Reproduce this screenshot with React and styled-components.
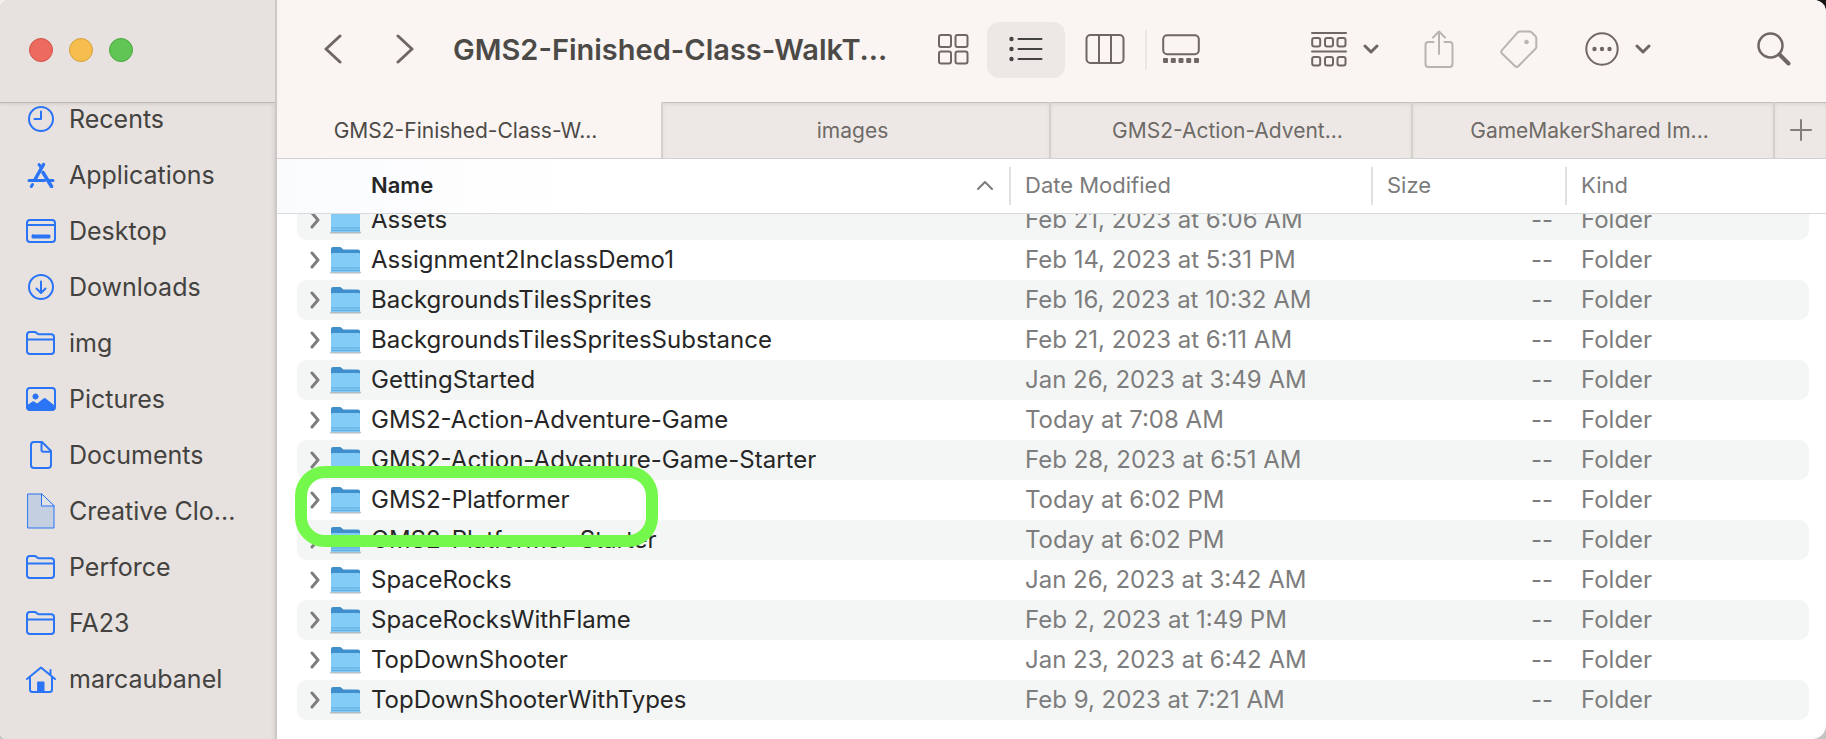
import React from "react";
import styled, { createGlobalStyle, css } from "styled-components";

const GlobalStyle = createGlobalStyle`
  *, *::before, *::after { box-sizing: border-box; }
  body {
    margin: 0;
    background: linear-gradient(to top, #c4c4c4 50%, transparent 50%),
      linear-gradient(to right, #f4f1ef 50%, #161616 50%);
    font-family: Inter, "Liberation Sans", sans-serif;
    -webkit-font-smoothing: antialiased;
  }
  button { font: inherit; color: inherit; background: none; border: 0; padding: 0; margin: 0; cursor: pointer; }
  a { color: inherit; text-decoration: none; }
  svg { display: block; flex: none; }
`;

const Window = styled.main`
  display: grid;
  grid-template-columns: 277px minmax(0, 1fr);
  min-height: 100vh;
  background: #ffffff;
  border-radius: 8px 12px 14px 6px;
  overflow: hidden;
`;

const Sidebar = styled.aside`
  display: flex;
  flex-direction: column;
  background: #e7e2df;
  color: #434240;
  border-right: 2px solid #cdc8c5;
  box-shadow: inset -4px 0 4px -3px #d3cecb;
`;

const SidebarTop = styled.div`
  position: relative;
  z-index: 1;
  display: flex;
  align-items: center;
  gap: 16px;
  height: 103px;
  padding: 0 0 2px 29px;
  background: #e7e2df;
  border-bottom: 1px solid #bcb7b4;
  box-shadow: 0 1px 3px #cfcac7;
`;

const TrafficLight = styled.button`
  width: 24px;
  height: 24px;
  border-radius: 50%;
  background: ${(p) => p.$fill};
  border: 1px solid ${(p) => p.$edge};
`;

const Places = styled.ul`
  list-style: none;
  margin: -12px 0 0;
  padding: 0;
`;

const PlaceLink = styled.a`
  display: flex;
  align-items: center;
  height: 56px;
  padding: 0 24px;
  gap: 11px;
  font-size: 25px;
  line-height: 32px;
  color: #434240;

  svg { color: #2a74f5; }
`;

const PlaceIcon = styled.span`
  display: flex;
  justify-content: center;
  width: 34px;
`;

const PlaceName = styled.span`
  white-space: nowrap;
`;

const Browser = styled.section`
  display: flex;
  flex-direction: column;
  min-width: 0;
`;

const Toolbar = styled.header`
  display: flex;
  align-items: center;
  height: 102px;
  padding: 0 35px 2px 36px;
  background: #faf5f2;
  color: #6e6763;
`;

const NavButtons = styled.div`
  display: flex;
  gap: 32px;
`;

const IconButton = styled.button`
  display: flex;
  align-items: center;
  justify-content: center;
  gap: 16px;
  height: 56px;
  min-width: 40px;
  padding-bottom: 2px;
  opacity: ${(p) => (p.disabled ? 0.45 : 1)};
`;

const Title = styled.h1`
  flex: 1;
  min-width: 0;
  margin: 0 0 0 28px;
  font-size: 29px;
  line-height: 36px;
  font-weight: 600;
  color: #4c4a47;
  white-space: nowrap;
  overflow: hidden;
`;

const ViewSwitch = styled.div`
  display: flex;
  align-items: center;
  margin-right: 96px;
`;

const ViewButton = styled(IconButton)`
  width: 80px;
  border-radius: 12px;
  ${(p) =>
    p.$active &&
    css`
      width: 78px;
      background: #ede8e5;
      color: #454341;
    `}
  ${(p) =>
    p.$edge &&
    css`
      width: 68px;
    `}
`;

const ViewDivider = styled.span`
  width: 2px;
  height: 40px;
  background: #ece7e4;
`;

const Actions = styled.div`
  display: flex;
  align-items: center;
  gap: 40px;
`;

const MoreButton = styled(IconButton)`
  margin-left: 6px;
`;

const SearchButton = styled(IconButton)`
  min-width: 32px;
  margin-left: 66px;
`;

const TabBar = styled.div`
  display: grid;
  grid-template-columns: 384fr 388fr 362fr 362fr 53px;
  height: 57px;
  border-bottom: 1px solid #d3d2d2;
  background: #ede8e5;
`;

const Tab = styled.button`
  overflow: hidden;
  padding: 1px 7px 0 0;
  white-space: nowrap;
  font-size: 21px;
  line-height: 28px;
  color: ${(p) => (p.$active ? "#4c4a47" : "#6e6a67")};
  background: ${(p) => (p.$active ? "#faf5f2" : "#ede8e5")};
  ${(p) =>
    !p.$active &&
    css`
      border-left: 2px solid #d6d1ce;
      box-shadow: inset 0 1px 0 #c4bfbc, inset 0 3px 4px -1px #d8d3d0;
    `}
`;

const NewTab = styled(Tab)`
  display: flex;
  align-items: center;
  justify-content: center;
  padding: 0;
  color: #827e7b;
`;

const FileTable = styled.table`
  display: block;
  color: #7d7d7d;
`;

const FileHead = styled.thead`
  display: block;
  position: relative;
  z-index: 1;
  background: linear-gradient(to right, #fafbfd, #ffffff 20%);
  border-bottom: 1px solid #d8dada;
`;

const HeadRow = styled.tr`
  display: grid;
  grid-template-columns: minmax(0, 1fr) 362px 194px 261px;
  align-items: center;
  height: 54px;
`;

const HeadCell = styled.th`
  display: flex;
  align-items: center;
  justify-content: space-between;
  height: 38px;
  padding: 0 16px 2px 14px;
  border-left: 2px solid #e0e0e0;
  font-size: 22px;
  line-height: 28px;
  font-weight: 400;
  color: #7b7b7b;
`;

const NameHeadCell = styled(HeadCell)`
  border-left: 0;
  padding-left: 94px;
  font-weight: 600;
  color: #262626;

  svg { color: #7b7b7b; }
`;

const FileBody = styled.tbody`
  display: block;
  margin: -14px 17px 19px 20px;
`;

const FileRow = styled.tr`
  display: grid;
  grid-template-columns: minmax(0, 1fr) 362px 194px 244px;
  align-items: center;
  position: relative;
  height: 40px;
  border-radius: 10px;
  font-size: 24px;
  line-height: 32px;

  &:nth-child(odd) { background: #f4f6f5; }
`;

const Cell = styled.td`
  padding: 0 12px 0 16px;
  text-align: ${(p) => p.$align || "left"};
  white-space: nowrap;
`;

const NameCell = styled.td`
  display: flex;
  align-items: center;
  padding: 0 0 0 8px;
  color: #262626;
  white-space: nowrap;
`;

const Disclosure = styled.button`
  display: flex;
  align-items: center;
  justify-content: center;
  width: 20px;
  height: 32px;
  margin-right: 5px;
  color: #7e7e7e;
`;

const FileName = styled.span`
  margin-left: 10px;
`;

const Highlight = styled.span`
  position: absolute;
  z-index: 1;
  top: -14px;
  left: -2px;
  width: 363px;
  height: 81px;
  border: 12px solid #75f84c;
  border-radius: 30px;
  pointer-events: none;
`;

function Icon({ w, h, sw = 2, children }) {
  return (
    <svg width={w} height={h} viewBox={`0 0 ${w} ${h}`} fill="none" stroke="currentColor"
      strokeWidth={sw} strokeLinecap="round" strokeLinejoin="round" aria-hidden="true">
      {children}
    </svg>
  );
}

const RecentsIcon = () => (
  <Icon w={26} h={26}><circle cx="13" cy="13" r="12" /><path d="M13 5.5V13H6.5" /></Icon>
);

const ApplicationsIcon = () => (
  <Icon w={28} h={26} sw={3}>
    <path d="M16.500 2.500 8 17.500" strokeWidth="3.500" />
    <path d="M12 2.500l2 3" />
    <path d="M16 10.500l8.500 14" strokeWidth="3.500" />
    <path d="M2 18.500h15.500M22 18.500H26" />
    <path d="M5.500 22.500l-1.200 2" />
  </Icon>
);

const DesktopIcon = () => (
  <Icon w={30} h={24}>
    <rect x="1" y="1" width="28" height="22" rx="3" />
    <path d="M1 6h28" />
    <rect x="6" y="16" width="18" height="3" rx="0.5" fill="currentColor" strokeWidth="1" />
  </Icon>
);

const DownloadsIcon = () => (
  <Icon w={26} h={26}><circle cx="13" cy="13" r="12" /><path d="M13 7.500V18.500M8.500 14.500l4.500 4.500 4.500-4.500" /></Icon>
);

const FolderIcon = () => (
  <Icon w={30} h={24}>
    <path d="M1 8.500V4c0-2 1-3 3-3h4.500c1 0 1.500.3 2.200 1l.8.7c.4.4.8.5 1.500.5H25c2 0 3 1 3 3V20c0 2-1 3-3 3H4c-2 0-3-1-3-3V8.500h27" />
  </Icon>
);

const PicturesIcon = () => (
  <Icon w={30} h={24}>
    <rect x="1" y="1" width="28" height="22" rx="3" />
    <circle cx="9.500" cy="9.500" r="2.600" fill="currentColor" strokeWidth="1" />
    <path d="M1.500 18.500l5-3.500c.6-.4 1-.4 1.600 0l3 2 6.500-5c.8-.6 1.400-.6 2.200 0l8.700 7V21c0 1-.7 2-2 2H4c-1.500 0-2.500-1-2.500-2z" fill="currentColor" strokeWidth="1" />
  </Icon>
);

const DocumentIcon = () => (
  <Icon w={22} h={28}>
    <path d="M4 1h8l9 9v14c0 2-1 3-3 3H4c-2 0-3-1-3-3V4c0-2 1-3 3-3z" />
    <path d="M11.500 1v8c0 1.200.5 1.800 1.800 1.800H21" />
  </Icon>
);

const CreativeCloudIcon = () => (
  <Icon w={28} h={36} sw={1}>
    <path d="M1 1h13l13 12v22H1z" fill="#c4cfe2" />
    <path d="M14.500 1v12H27z" fill="#e2e2e6" />
  </Icon>
);

const HomeIcon = () => (
  <Icon w={32} h={27}>
    <path d="M2 13 16 1.500 30 13M25.500 8.500V4M5 12v11.500c0 1.500.8 2.500 2.500 2.500h17c1.700 0 2.500-1 2.500-2.500V12" />
    <path d="M13 16h6v9.500h-6z" fill="currentColor" strokeWidth="1" />
  </Icon>
);

const BackIcon = () => <Icon w={20} h={30} sw={3}><path d="M17 2 3 15l14 13" /></Icon>;
const ForwardIcon = () => <Icon w={20} h={30} sw={3}><path d="M3 2l14 13L3 28" /></Icon>;
const DropIcon = () => <Icon w={16} h={12} sw={3}><path d="M2 3l6 6 6-6" /></Icon>;

const GridIcon = () => (
  <Icon w={32} h={32} sw={2}>
    <rect x="2" y="2" width="12" height="12" rx="2" />
    <rect x="18.500" y="2" width="12" height="12" rx="2" />
    <rect x="2" y="18.500" width="12" height="12" rx="2" />
    <rect x="18.500" y="18.500" width="12" height="12" rx="2" />
  </Icon>
);

const ListIcon = () => (
  <Icon w={34} h={26}>
    <path d="M9.500 3h23M9.500 13h23M9.500 23h23" />
    <g fill="currentColor" stroke="none">
      <circle cx="2.500" cy="3" r="2.200" /><circle cx="2.500" cy="13" r="2.200" /><circle cx="2.500" cy="23" r="2.200" />
    </g>
  </Icon>
);

const ColumnsIcon = () => (
  <Icon w={40} h={32}>
    <rect x="1.500" y="2" width="37" height="28" rx="4" /><path d="M14 2v28M26 2v28" />
  </Icon>
);

const GalleryIcon = () => (
  <Icon w={38} h={30}>
    <rect x="1.200" y="1.200" width="35.600" height="19" rx="4" />
    <g fill="currentColor" stroke="none">
      {[1, 8.8, 16.5, 24.2, 32].map((x) => <rect key={x} x={x} y="24" width="5" height="5" rx="1" />)}
    </g>
  </Icon>
);

const GroupIcon = () => (
  <Icon w={36} h={36}>
    <path d="M1 2h34M1 20.500h34" />
    {[1.2, 14, 26.5].map((x) => (
      <g key={x}>
        <rect x={x} y="7" width="8" height="8.500" rx="2" />
        <rect x={x} y="26" width="8" height="8.500" rx="2" />
      </g>
    ))}
  </Icon>
);

const ShareIcon = () => (
  <Icon w={30} h={38}>
    <path d="M9.500 12H4.500c-2 0-3 1-3 3v19c0 2 1 3 3 3h21c2 0 3-1 3-3V15c0-2-1-3-3-3h-5" />
    <path d="M15 24V1.500M9 7.500l6-6 6 6" />
  </Icon>
);

const TagIcon = () => (
  <Icon w={38} h={38}>
    <path d="M20 1.500h9.500c1 0 1.600.3 2.300 1l3.500 3.500c.7.7 1 1.300 1 2.300V16.500c0 1-.3 1.700-1 2.500L18.500 36c-1.200 1.200-2.400 1.200-3.600 0L2 23.500c-1-1-1-2.200 0-3.300L17.500 2.600c.7-.8 1.400-1.100 2.500-1.100z" />
    <circle cx="26.500" cy="12" r="2" fill="currentColor" strokeWidth="0.500" />
  </Icon>
);

const MoreIcon = () => (
  <Icon w={34} h={34}>
    <circle cx="17" cy="17" r="15.700" />
    <g fill="currentColor" stroke="none">
      <circle cx="9.500" cy="17" r="2.200" /><circle cx="17" cy="17" r="2.200" /><circle cx="24.500" cy="17" r="2.200" />
    </g>
  </Icon>
);

const SearchIcon = () => (
  <Icon w={34} h={34} sw={3}>
    <circle cx="13.500" cy="13.500" r="12" strokeWidth="2.500" /><path d="M22.500 22.500l9 9" strokeWidth="4" />
  </Icon>
);

const PlusIcon = () => <Icon w={22} h={22}><path d="M11 1v20M1 11h20" /></Icon>;
const SortIcon = () => <Icon w={16} h={10}><path d="M1 9l7-7 7 7" /></Icon>;
const RowChevron = () => <Icon w={10} h={18} sw={3}><path d="M2 2l6 7-6 7" /></Icon>;

const FinderFolder = () => (
  <svg width="31" height="28" viewBox="0 0 31 28" aria-hidden="true">
    <path d="M1 3c0-1.300.7-2 2-2h6.500c1 0 1.500.3 2.200 1l1 1c.5.5 1 .6 1.800.6H28c1.300 0 2 .7 2 2V24H1z" fill="#3f8fcd" />
    <path d="M1 26.500h29" stroke="#000" strokeOpacity="0.250" strokeWidth="2" strokeLinecap="round" />
    <path d="M1 8.500C1 7.500 1.500 7 2.500 7h26c1 0 1.500.5 1.500 1.500V25c0 .8-.5 1.300-1.300 1.300H2.300C1.500 26.300 1 25.800 1 25z" fill="#82ccf7" />
    <path d="M1 22h29M1 24.300h29" stroke="#5aa9dc" strokeWidth="1" />
  </svg>
);

const places = [
  ["Recents", RecentsIcon],
  ["Applications", ApplicationsIcon],
  ["Desktop", DesktopIcon],
  ["Downloads", DownloadsIcon],
  ["img", FolderIcon],
  ["Pictures", PicturesIcon],
  ["Documents", DocumentIcon],
  ["Creative Clo...", CreativeCloudIcon],
  ["Perforce", FolderIcon],
  ["FA23", FolderIcon],
  ["marcaubanel", HomeIcon],
];

const tabs = ["GMS2-Finished-Class-W...", "images", "GMS2-Action-Advent...", "GameMakerShared Im..."];

const files = [
  ["Assets", "Feb 21, 2023 at 6:06 AM"],
  ["Assignment2InclassDemo1", "Feb 14, 2023 at 5:31 PM"],
  ["BackgroundsTilesSprites", "Feb 16, 2023 at 10:32 AM"],
  ["BackgroundsTilesSpritesSubstance", "Feb 21, 2023 at 6:11 AM"],
  ["GettingStarted", "Jan 26, 2023 at 3:49 AM"],
  ["GMS2-Action-Adventure-Game", "Today at 7:08 AM"],
  ["GMS2-Action-Adventure-Game-Starter", "Feb 28, 2023 at 6:51 AM"],
  ["GMS2-Platformer", "Today at 6:02 PM"],
  ["GMS2-Platformer-Starter", "Today at 6:02 PM"],
  ["SpaceRocks", "Jan 26, 2023 at 3:42 AM"],
  ["SpaceRocksWithFlame", "Feb 2, 2023 at 1:49 PM"],
  ["TopDownShooter", "Jan 23, 2023 at 6:42 AM"],
  ["TopDownShooterWithTypes", "Feb 9, 2023 at 7:21 AM"],
];

const highlighted = "GMS2-Platformer";

export default function App() {
  return (
    <>
      <GlobalStyle />
      <Window>
        <Sidebar>
          <SidebarTop>
            <TrafficLight aria-label="Close" $fill="#ed6a5f" $edge="#d35349" />
            <TrafficLight aria-label="Minimize" $fill="#f5be4f" $edge="#d8a039" />
            <TrafficLight aria-label="Zoom" $fill="#61c555" $edge="#4aa73c" />
          </SidebarTop>
          <nav aria-label="Favorites">
            <Places>
              {places.map(([name, Glyph]) => (
                <li key={name}>
                  <PlaceLink href="#">
                    <PlaceIcon><Glyph /></PlaceIcon>
                    <PlaceName>{name}</PlaceName>
                  </PlaceLink>
                </li>
              ))}
            </Places>
          </nav>
        </Sidebar>

        <Browser>
          <Toolbar>
            <NavButtons>
              <IconButton aria-label="Back"><BackIcon /></IconButton>
              <IconButton aria-label="Forward"><ForwardIcon /></IconButton>
            </NavButtons>
            <Title>GMS2-Finished-Class-WalkT...</Title>
            <ViewSwitch>
              <ViewButton $edge aria-label="Icons"><GridIcon /></ViewButton>
              <ViewButton $active aria-label="List"><ListIcon /></ViewButton>
              <ViewButton aria-label="Columns"><ColumnsIcon /></ViewButton>
              <ViewDivider />
              <ViewButton $edge aria-label="Gallery"><GalleryIcon /></ViewButton>
            </ViewSwitch>
            <Actions>
              <IconButton aria-label="Group"><GroupIcon /><DropIcon /></IconButton>
              <IconButton disabled aria-label="Share"><ShareIcon /></IconButton>
              <IconButton disabled aria-label="Tags"><TagIcon /></IconButton>
              <MoreButton aria-label="More"><MoreIcon /><DropIcon /></MoreButton>
              <SearchButton aria-label="Search"><SearchIcon /></SearchButton>
            </Actions>
          </Toolbar>

          <TabBar>
            {tabs.map((name, i) => (
              <Tab key={name} $active={i === 0}>{name}</Tab>
            ))}
            <NewTab aria-label="New tab"><PlusIcon /></NewTab>
          </TabBar>

          <FileTable>
            <FileHead>
              <HeadRow>
                <NameHeadCell scope="col">Name<SortIcon /></NameHeadCell>
                <HeadCell scope="col">Date Modified</HeadCell>
                <HeadCell scope="col">Size</HeadCell>
                <HeadCell scope="col">Kind</HeadCell>
              </HeadRow>
            </FileHead>
            <FileBody>
              {files.map(([name, date]) => (
                <FileRow key={name}>
                  <NameCell>
                    <Disclosure aria-label={`Expand ${name}`}><RowChevron /></Disclosure>
                    <FinderFolder />
                    <FileName>{name}</FileName>
                    {name === highlighted && <Highlight />}
                  </NameCell>
                  <Cell>{date}</Cell>
                  <Cell $align="right">--</Cell>
                  <Cell>Folder</Cell>
                </FileRow>
              ))}
            </FileBody>
          </FileTable>
        </Browser>
      </Window>
    </>
  );
}
